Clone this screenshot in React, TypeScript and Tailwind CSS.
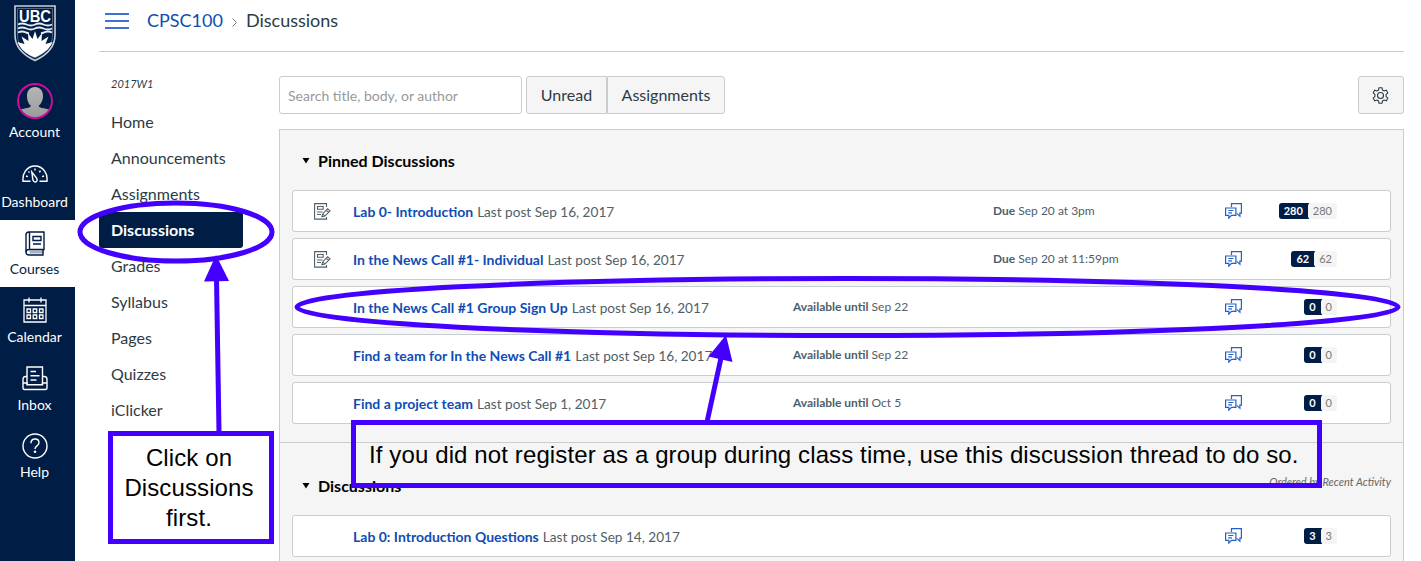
import React from "react";

type Topic = {
  title: string;
  posted: string;
  assignment?: boolean;
  available?: string;
  due?: string;
  unread: number;
  total: number;
};

const pinned: Topic[] = [
  { title: "Lab 0- Introduction", posted: "Sep 16, 2017", assignment: true, due: "Sep 20 at 3pm", unread: 280, total: 280 },
  { title: "In the News Call #1- Individual", posted: "Sep 16, 2017", assignment: true, due: "Sep 20 at 11:59pm", unread: 62, total: 62 },
  { title: "In the News Call #1 Group Sign Up", posted: "Sep 16, 2017", available: "Sep 22", unread: 0, total: 0 },
  { title: "Find a team for In the News Call #1", posted: "Sep 16, 2017", available: "Sep 22", unread: 0, total: 0 },
  { title: "Find a project team", posted: "Sep 1, 2017", available: "Oct 5", unread: 0, total: 0 },
];

const recent: Topic[] = [
  { title: "Lab 0: Introduction Questions", posted: "Sep 14, 2017", unread: 3, total: 3 },
];

const courseLinks = ["Home", "Announcements", "Assignments", "Discussions", "Grades", "Syllabus", "Pages", "Quizzes", "iClicker"];

function Crest() {
  return (
    <svg width="42" height="57" viewBox="0 0 42 57" fill="none">
      <path d="M1 1h40v29c0 12-8 20-20 25.500C9 50 1 42 1 30z" stroke="#c9d0dc" strokeWidth="1.600" />
      <path d="M3.500 3.500h35V30c0 11-7 18-17.500 23C10.500 48 3.500 41 3.500 30z" stroke="#8793aa" strokeWidth=".6" />
      <text x="21" y="17" textAnchor="middle" textLength="32" lengthAdjust="spacingAndGlyphs" fontFamily="Liberation Sans, sans-serif" fontWeight="700" fontSize="17" fill="#fff">UBC</text>
      <g stroke="#e8ecf3" strokeWidth="1.900">
        <path d="M4 19.500c3-1.500 5-1.500 8.500 0s5.500 1.500 8.500 0 5-1.500 8.500 0 5.500 1.500 8.500 0" />
        <path d="M4 23.500c3-1.500 5-1.500 8.500 0s5.500 1.500 8.500 0 5-1.500 8.500 0 5.500 1.500 8.500 0" />
        <path d="M4 27.500c3-1.500 5-1.500 8 0l3 1M38 27.500c-3-1.500-5-1.500-8 0l-3 1" />
      </g>
      <path d="M21 26l2.500 8 4.500-6-.5 8 7-4.500-3 7.500 7-2c-3 7.500-9 11.500-17.500 15.500C12 49 6.500 44.500 3.500 37l7 2-3-7.500 7 4.500-.5-8 4.500 6z" fill="#fff" />
    </svg>
  );
}

function Avatar() {
  return (
    <svg width="36" height="36" viewBox="0 0 36 36">
      <defs>
        <clipPath id="avatar"><circle cx="18" cy="18" r="16.500" /></clipPath>
        <linearGradient id="shade" x1="0" y1="0" x2="0" y2="1"><stop stopColor="#b5b5b5" /><stop offset="1" stopColor="#999" /></linearGradient>
      </defs>
      <path clipPath="url(#avatar)" d="M18 4c5 0 8 3.500 8 9 0 5-2.500 8.500-4.500 10 1 2.500 9 2 13 5v10H1V28c4-3 12-2.500 13-5-2-1.500-4-5-4-10 0-5.500 3-9 8-9z" fill="url(#shade)" />
      <circle cx="18" cy="18" r="17" fill="none" stroke="#d30b9c" strokeWidth="1.900" />
    </svg>
  );
}

function GaugeIcon() {
  return (
    <svg width="26" height="18" viewBox="0 0 26 18" fill="none" stroke="#fff" strokeWidth="1.400">
      <path d="M8.500 16.300H1C.7 13 .9 9.500 3.300 6.200 5.600 3 9 1 13 1s7.400 2 9.700 5.200c2.400 3.300 2.600 6.800 2.300 10.100h-7.500" />
      <path d="M9.800 7l1 7.300c.3 2 1.800 3 3.100 2.500s1.600-2.100.7-3.700z" />
      <path d="M13 3.500v2M18.500 5.800l-1.200 1.500M22 11l-1.900.7M4 11l1.900.7M6.500 6.500l1 1.100" />
    </svg>
  );
}

function BookIcon() {
  return (
    <svg width="20" height="25" viewBox="0 0 20 25" fill="none" stroke="#001d45" strokeWidth="1.400">
      <path d="M4.500 21h14" stroke="#a8b2c2" strokeWidth="3" />
      <path d="M19 1H4Q1 1 1 4v17q0 3 3 3h14v-5" />
      <path d="M19 .5v18H4q-3 0-3 2.500M4.500 1v17" />
      <path d="M8 5.500h8v4H8zM8 13h8" />
    </svg>
  );
}

function CalendarIcon() {
  return (
    <svg width="24" height="26" viewBox="0 0 24 26" fill="none" stroke="#fff" strokeWidth="1.300">
      <path d="M1 3h22v22H1zM1 8.500h22M6 .5v5M18 .5v5" />
      <path d="M4 12h3.500v3.500H4zM10.200 12h3.500v3.500h-3.500zM16.500 12H20v3.500h-3.500zM4 18h3.500v3.500H4zM10.200 18h3.500v3.500h-3.500zM16.500 18H20v3.500h-3.500z" />
    </svg>
  );
}

function InboxIcon() {
  return (
    <svg width="26" height="25" viewBox="0 0 26 25" fill="none" stroke="#fff" strokeWidth="1.400">
      <path d="M5 18.500V1h15.500v17.500M8.500 5.500H14M8.500 9.800h9M8.500 14h6" />
      <path d="M5 10.500H3.500Q1 10.500 1 13.500v8.500q0 1.500 1.500 1.500h21q1.500 0 1.500-1.500v-8.500q0-3-2.500-3h-2M1 17h4v1.800h15.500V17H25" />
    </svg>
  );
}

function HelpIcon() {
  return (
    <svg width="26" height="26" viewBox="0 0 26 26" fill="none" stroke="#fff" strokeWidth="1.400">
      <circle cx="13" cy="13" r="12" />
      <path d="M9 10.200C9 7.500 10.700 6 13 6s4 1.500 4 3.700c0 3-4 3.300-4 6.300" />
      <circle cx="13" cy="18.800" r=".6" fill="#fff" />
    </svg>
  );
}

function AssignmentIcon() {
  return (
    <svg width="17" height="17" viewBox="0 0 17 17" fill="none" stroke="#4f6069" strokeWidth="1.100">
      <path d="M12.500 4V.6H.6v15.500h11.900V14" />
      <path d="M3.500 3.500h5.700v2.800H3.500zM3 9h5.500M3 11.500h4" />
      <path d="M8 13.700l.7-2.800 4.800-5.200 2.500 2.200-5 5.200zM12.100 7.200l2.500 2.200M8.700 10.900l2.300 2.200" />
    </svg>
  );
}

function RepliesIcon() {
  return (
    <svg width="17" height="16" viewBox="0 0 17 16" fill="none" stroke="#2461c4" strokeWidth="1.200">
      <path d="M6.500 4V.7h9.900v9.400h-1.500v3l-3.200-2.700" />
      <path d="M.6 5h10.300v7.400H6.500l-2.700 2.700v-2.700H.6zM3.300 7.500h5M3.300 9.800H7" />
    </svg>
  );
}

function NavItem({ label, active, className, children }: { label: string; active?: boolean; className: string; children: React.ReactNode }) {
  return (
    <a className={`flex w-[75px] shrink-0 flex-col items-center pr-[6px] text-[14px] leading-[18px] ${active ? "bg-white text-[#001d45]" : "text-white"} ${className}`}>
      {children}
      <span className="mt-auto whitespace-nowrap">{label}</span>
    </a>
  );
}

function TopicRow({ topic }: { topic: Topic }) {
  return (
    <li className="flex h-[42px] items-center rounded-[3px] border border-[#c7cdd1] bg-white">
      <span className="w-[60px] shrink-0 pl-[21px]">{topic.assignment && <AssignmentIcon />}</span>
      <span className="flex w-[440px] shrink-0 items-baseline gap-1 whitespace-nowrap pt-px text-[14px] leading-5">
        <a className="shrink-0 font-bold text-[#0f4db3]">{topic.title}</a>
        <span className="text-[13.6px] text-[#4f6069]">Last post {topic.posted}</span>
      </span>
      <span className="w-[200px] shrink-0 text-[12px] leading-5 text-[#4f6069]">
        {topic.available && <><b>Available until</b> {topic.available}</>}
      </span>
      <span className="w-[200px] shrink-0 text-[12px] leading-5 text-[#4f6069]">
        {topic.due && <><b>Due</b> {topic.due}</>}
      </span>
      <span className="flex w-[80px] shrink-0 justify-center"><RepliesIcon /></span>
      <span className="flex w-[64px] shrink-0 justify-end text-[11px] leading-4">
        <b className="rounded-l-[3px] bg-[#001d45] pl-[5px] pr-[6px] text-white">{topic.unread}</b>
        <span className="-ml-px rounded-[3px] bg-[#f4f4f4] px-[5px] text-[#777]">{topic.total}</span>
      </span>
    </li>
  );
}

function SectionTitle({ children }: { children: React.ReactNode }) {
  return (
    <h2 className="flex items-center text-[16px] font-bold leading-6 text-black">
      <svg className="mr-2" width="8" height="6" viewBox="0 0 8 6"><path d="M.5 0h7L4 5.500z" /></svg>
      <span>{children}</span>
    </h2>
  );
}

export default function App() {
  return (
    <div className="relative flex h-[561px] w-[1421px] overflow-hidden bg-white font-['Lato',sans-serif] text-[#2d3b45]">
      <nav className="flex w-[75px] shrink-0 flex-col bg-[#001d45]">
        <div className="flex h-[75px] shrink-0 justify-center pr-[6px] pt-[5px]"><Crest /></div>
        <NavItem label="Account" className="h-[70px] pb-[4px] pt-[8px]"><Avatar /></NavItem>
        <NavItem label="Dashboard" className="h-[75px] pb-[9px] pt-[20px]"><GaugeIcon /></NavItem>
        <NavItem label="Courses" active className="h-[67px] pb-[9px] pt-[11px]"><BookIcon /></NavItem>
        <NavItem label="Calendar" className="h-[68px] pb-[9px] pt-[10px]"><CalendarIcon /></NavItem>
        <NavItem label="Inbox" className="h-[68px] pb-[9px] pt-[11px]"><InboxIcon /></NavItem>
        <NavItem label="Help" className="h-[67px] pb-[9px] pt-[10px]"><HelpIcon /></NavItem>
      </nav>

      <div className="ml-6 flex w-[1305px] shrink-0 flex-col">
        <header className="flex h-[52px] shrink-0 items-center border-b border-[#c7cdd1] pb-[10px] pl-[6px] text-[18px]">
          <svg width="24" height="18" viewBox="0 0 24 18" stroke="#3c73cb" strokeWidth="2"><path d="M0 2h24M0 9h24M0 16h24" /></svg>
          <a className="ml-[18px] text-[#0f4db3]">CPSC100</a>
          <svg className="ml-[9px] mr-[9px] mt-1" width="5" height="9" viewBox="0 0 5 9" fill="none" stroke="#777"><path d="M.5.5l4 4-4 4" /></svg>
          <span>Discussions</span>
        </header>

        <div className="flex grow">
          <aside className="w-[180px] shrink-0 pt-[22px]">
            <p className="h-[30px] pl-3 text-[11px] italic leading-[20px]">2017W1</p>
            <ul className="w-36">
              {courseLinks.map((link) => (
                <li key={link} className={link === "Discussions" ? "h-9 rounded-[3px] bg-[#001d45] pl-3 text-[16px] font-bold leading-9 text-white" : "h-9 pl-3 text-[16px] leading-9"}>{link}</li>
              ))}
            </ul>
          </aside>

          <main className="w-[1125px] shrink-0 pt-6">
            <div className="flex h-[38px]">
              <input className="w-[243px] rounded-[3px] border border-[#c7cdd1] px-2 text-[14px] placeholder:text-[#999]" placeholder="Search title, body, or author" />
              <button className="ml-1 w-[81px] rounded-l-[3px] border border-[#c7cdd1] bg-[#f5f5f5] text-[16px]">Unread</button>
              <button className="w-[118px] rounded-r-[3px] border border-[#c7cdd1] bg-[#f5f5f5] text-[16px]">Assignments</button>
              <button className="ml-auto flex w-[46px] items-center justify-center rounded-[3px] border border-[#c7cdd1] bg-[#f5f5f5] pr-px">
                <svg width="17" height="17" viewBox="0 0 17 17" fill="none" stroke="#2d3b45" strokeWidth="1.100">
                  <path d="M7 .8h3l.5 2.300 1.600.9 2.200-.8 1.500 2.600-1.700 1.600v2.200l1.700 1.600-1.500 2.600-2.200-.8-1.600.9-.5 2.300H7l-.5-2.300-1.600-.9-2.200.8-1.500-2.600 1.700-1.600V7.400L1.200 5.800l1.500-2.600 2.200.8 1.600-.9z" />
                  <circle cx="8.500" cy="8.500" r="3" />
                </svg>
              </button>
            </div>
            <div className="mt-[15px] h-[460px] border border-[#c7cdd1] bg-[#f5f5f5]">
              <section className="h-[313px] border-b border-[#c7cdd1] px-3 pt-[19px]">
                <div className="pl-[10px]"><SectionTitle>Pinned Discussions</SectionTitle></div>
                <ul className="mt-[17px] flex flex-col gap-[6px]">{pinned.map((t) => <TopicRow key={t.title} topic={t} />)}</ul>
              </section>
              <section className="px-3 pt-[31px]">
                <div className="flex justify-between pl-[10px]">
                  <SectionTitle>Discussions</SectionTitle>
                  <em className="text-[11px] leading-[15px] text-[#666]">Ordered by Recent Activity</em>
                </div>
                <ul className="mt-[17px]">{recent.map((t) => <TopicRow key={t.title} topic={t} />)}</ul>
              </section>
            </div>
          </main>
        </div>
      </div>

      <svg className="pointer-events-none absolute inset-0" width="1421" height="561" fill="none" stroke="#4400ff" strokeWidth="5">
        <ellipse cx="176" cy="232" rx="96" ry="29" />
        <path d="M219 433L216.500 278" />
        <path d="M216 255l13 26-25 .5z" fill="#4400ff" stroke="none" />
        <ellipse cx="847.500" cy="307" rx="550.500" ry="28.500" />
        <path d="M707 422l14-64" />
        <path d="M726 335l6.500 27-24-5.500z" fill="#4400ff" stroke="none" />
      </svg>
      <div className="absolute left-[108px] top-[431px] h-[113px] w-[166px] border-[5px] border-[#4400ff] bg-white pr-[4px] pt-[7px] text-center font-['Liberation_Sans',sans-serif] text-[24px] leading-[30px] tracking-[0.11px] text-black">
        Click on<br />Discussions<br />first.
      </div>
      <div className="absolute left-[351px] top-[420px] h-[68px] w-[971px] whitespace-nowrap border-[5px] border-[#4400ff] pl-[13px] pt-[15px] font-['Liberation_Sans',sans-serif] text-[24px] leading-[30px] tracking-[0.115px] text-black">
        If you did not register as a group during class time, use this discussion thread to do so.
      </div>
    </div>
  );
}
